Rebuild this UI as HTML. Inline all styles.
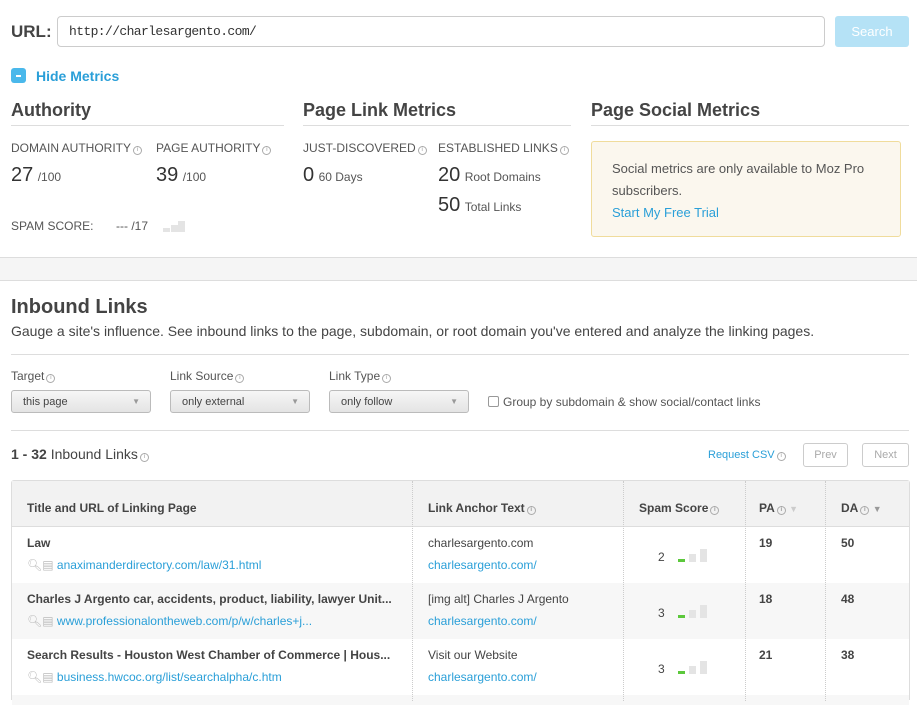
<!DOCTYPE html><html><head><style>
*{margin:0;padding:0;box-sizing:border-box}
body{width:917px;height:701px;overflow:hidden;background:#fff;font-family:"Liberation Sans",sans-serif;color:#444;position:relative}
.a{position:absolute;white-space:nowrap}
.i{display:inline-block;width:9px;height:9px;border:1px solid #aaa;border-radius:50%;font-size:6px;line-height:7px;text-align:center;color:#999;vertical-align:1px;margin-left:2px}
.h2{font-size:18px;font-weight:bold;color:#444}
.lbl{font-size:12px;color:#555}
.big{font-size:20px;color:#333}
.sm{font-size:12px;color:#555}
.hr{position:absolute;height:1px;background:#ddd}
.link{color:#2a9fd8}
.sel{position:absolute;top:390px;width:140px;height:23px;border:1px solid #bbb;border-radius:3px;background:linear-gradient(#f6f6f6,#e4e4e4);font-size:11px;color:#444;padding:5px 11px}
.sel:after{content:"▼";position:absolute;right:10px;top:6px;font-size:8px;color:#999}
.vl{position:absolute;top:481px;height:220px;border-left:1px dotted #ccc}
.th{font-size:12px;font-weight:bold;color:#444}
.bars{position:absolute;width:32px;height:14px}
.bars i{position:absolute;bottom:0;width:7px;background:#e4e4e4}
</style></head><body>
<div class="a" style="left:11px;top:22px;font-size:17px;color:#444;font-weight:bold">URL:</div>
<div class="a" style="left:57px;top:16px;width:768px;height:31px;border:1px solid #ccc;border-radius:4px;font-family:'Liberation Mono',monospace;font-size:13px;color:#333;padding:7px 11px;letter-spacing:-.6px">http://charlesargento.com/</div>
<div class="a" style="left:835px;top:16px;width:74px;height:31px;background:#b5e2f6;border-radius:3px;color:#fff;font-size:13px;text-align:center;line-height:31px">Search</div>
<div class="a" style="left:11px;top:68px;width:15px;height:15px;background:#4ab8eb;border-radius:3px"><div style="position:absolute;left:5px;top:7px;width:5px;height:1.5px;background:#fff"></div></div>
<div class="a link" style="left:36px;top:68px;font-size:14px;font-weight:bold">Hide Metrics</div>

<div class="a h2" style="left:11px;top:100px">Authority</div>
<div class="a h2" style="left:303px;top:100px">Page Link Metrics</div>
<div class="a h2" style="left:591px;top:100px">Page Social Metrics</div>
<div class="hr" style="left:11px;top:125px;width:273px"></div>
<div class="hr" style="left:303px;top:125px;width:268px"></div>
<div class="hr" style="left:591px;top:125px;width:318px"></div>

<div class="a lbl" style="left:11px;top:141px">DOMAIN AUTHORITY<span class="i">i</span></div>
<div class="a lbl" style="left:156px;top:141px">PAGE AUTHORITY<span class="i">i</span></div>
<div class="a lbl" style="left:303px;top:141px">JUST-DISCOVERED<span class="i">i</span></div>
<div class="a lbl" style="left:438px;top:141px">ESTABLISHED LINKS<span class="i">i</span></div>
<div class="a" style="left:11px;top:164px"><span class="big">27</span> <span class="sm">/100</span></div>
<div class="a" style="left:156px;top:164px"><span class="big">39</span> <span class="sm">/100</span></div>
<div class="a" style="left:303px;top:164px"><span class="big">0</span> <span class="sm">60 Days</span></div>
<div class="a" style="left:438px;top:164px"><span class="big">20</span> <span class="sm">Root Domains</span></div>
<div class="a" style="left:438px;top:194px"><span class="big">50</span> <span class="sm">Total Links</span></div>
<div class="a lbl" style="left:11px;top:219px">SPAM SCORE:</div>
<div class="a lbl" style="left:116px;top:219px">--- /17</div>
<div class="bars" style="left:163px;top:218px"><i style="left:0;height:4px"></i><i style="left:8px;height:7px"></i><i style="left:15px;height:11px"></i></div>

<div class="a" style="left:591px;top:141px;width:310px;height:96px;background:#fbf7ee;border:1px solid #f0dc9c;border-radius:3px;padding:16px 20px;font-size:13px;color:#555;line-height:22px;white-space:normal">Social metrics are only available to Moz Pro subscribers.<br><span class="link">Start My Free Trial</span></div>

<div class="a" style="left:0;top:257px;width:917px;height:24px;background:#f5f5f5;border-top:1px solid #ddd;border-bottom:1px solid #ddd"></div>

<div class="a" style="left:11px;top:296px;font-size:20px;font-weight:bold;color:#444">Inbound Links</div>
<div class="a" style="left:11px;top:323px;font-size:14px;color:#444">Gauge a site's influence. See inbound links to the page, subdomain, or root domain you've entered and analyze the linking pages.</div>
<div class="hr" style="left:11px;top:354px;width:898px"></div>
<div class="a lbl" style="left:11px;top:369px">Target<span class="i">i</span></div>
<div class="a lbl" style="left:170px;top:369px">Link Source<span class="i">i</span></div>
<div class="a lbl" style="left:329px;top:369px">Link Type<span class="i">i</span></div>
<div class="sel" style="left:11px">this page</div>
<div class="sel" style="left:170px">only external</div>
<div class="sel" style="left:329px">only follow</div>
<div class="a" style="left:488px;top:396px;width:11px;height:11px;border:1px solid #999;border-radius:2px"></div>
<div class="a lbl" style="left:503px;top:395px">Group by subdomain &amp; show social/contact links</div>
<div class="hr" style="left:11px;top:430px;width:898px"></div>
<div class="a" style="left:11px;top:446px;font-size:14px;color:#444"><b>1 - 32</b> Inbound Links<span class="i">i</span></div>
<div class="a link" style="left:708px;top:449px;font-size:11px">Request CSV<span class="i">i</span></div>
<div class="a" style="left:803px;top:443px;width:45px;height:24px;border:1px solid #ccc;border-radius:3px;font-size:11px;color:#aaa;text-align:center;line-height:22px">Prev</div>
<div class="a" style="left:862px;top:443px;width:47px;height:24px;border:1px solid #ccc;border-radius:3px;font-size:11px;color:#aaa;text-align:center;line-height:22px">Next</div>

<div class="a" style="left:11px;top:480px;width:899px;height:220px;border:1px solid #ddd;border-bottom:none;border-radius:3px 3px 0 0"></div>
<div class="a" style="left:12px;top:481px;width:897px;height:46px;background:#f2f2f2;border-bottom:1px solid #ddd"></div>
<div class="a" style="left:12px;top:583px;width:897px;height:56px;background:#f7f7f7"></div>
<div class="a" style="left:12px;top:695px;width:897px;height:10px;background:#f7f7f7"></div>
<div class="vl" style="left:412px"></div><div class="vl" style="left:623px"></div><div class="vl" style="left:745px"></div><div class="vl" style="left:825px"></div>
<div class="a th" style="left:27px;top:501px">Title and URL of Linking Page</div>
<div class="a th" style="left:428px;top:501px">Link Anchor Text<span class="i">i</span></div>
<div class="a th" style="left:639px;top:501px">Spam Score<span class="i">i</span></div>
<div class="a th" style="left:759px;top:501px">PA<span class="i">i</span> <span style="color:#ccc;font-size:9px">▼</span></div>
<div class="a th" style="left:841px;top:501px">DA<span class="i">i</span> <span style="color:#999;font-size:9px">▼</span></div>

<div class="a th" style="left:27px;top:536px">Law</div>
<div class="a" style="left:27px;top:558px;font-size:12px"><span style="color:#bbb">🔍︎▤</span> <span class="link">anaximanderdirectory.com/law/31.html</span></div>
<div class="a" style="left:428px;top:536px;font-size:12px;color:#444">charlesargento.com</div>
<div class="a link" style="left:428px;top:558px;font-size:12px">charlesargento.com/</div>
<div class="a" style="left:658px;top:550px;font-size:12px">2</div>
<div class="bars" style="left:678px;top:548px"><i style="left:0;height:3px;background:#5cc83c"></i><i style="left:11px;height:8px"></i><i style="left:22px;height:13px"></i></div>
<div class="a th" style="left:759px;top:536px">19</div><div class="a th" style="left:841px;top:536px">50</div>

<div class="a th" style="left:27px;top:592px">Charles J Argento car, accidents, product, liability, lawyer Unit...</div>
<div class="a" style="left:27px;top:614px;font-size:12px"><span style="color:#bbb">🔍︎▤</span> <span class="link">www.professionalontheweb.com/p/w/charles+j...</span></div>
<div class="a" style="left:428px;top:592px;font-size:12px;color:#444">[img alt] Charles J Argento</div>
<div class="a link" style="left:428px;top:614px;font-size:12px">charlesargento.com/</div>
<div class="a" style="left:658px;top:606px;font-size:12px">3</div>
<div class="bars" style="left:678px;top:604px"><i style="left:0;height:3px;background:#5cc83c"></i><i style="left:11px;height:8px"></i><i style="left:22px;height:13px"></i></div>
<div class="a th" style="left:759px;top:592px">18</div><div class="a th" style="left:841px;top:592px">48</div>

<div class="a th" style="left:27px;top:648px">Search Results - Houston West Chamber of Commerce | Hous...</div>
<div class="a" style="left:27px;top:670px;font-size:12px"><span style="color:#bbb">🔍︎▤</span> <span class="link">business.hwcoc.org/list/searchalpha/c.htm</span></div>
<div class="a" style="left:428px;top:648px;font-size:12px;color:#444">Visit our Website</div>
<div class="a link" style="left:428px;top:670px;font-size:12px">charlesargento.com/</div>
<div class="a" style="left:658px;top:662px;font-size:12px">3</div>
<div class="bars" style="left:678px;top:660px"><i style="left:0;height:3px;background:#5cc83c"></i><i style="left:11px;height:8px"></i><i style="left:22px;height:13px"></i></div>
<div class="a th" style="left:759px;top:648px">21</div><div class="a th" style="left:841px;top:648px">38</div>
</body></html>
